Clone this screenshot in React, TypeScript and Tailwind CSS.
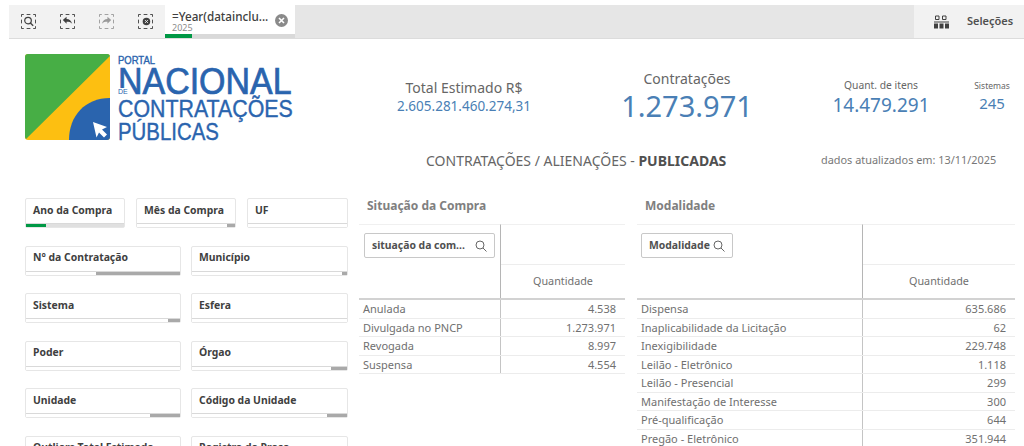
import React from "react";

const font = { fontFamily: '"Noto Sans", "Liberation Sans", sans-serif' };

function Bracket({ children, dim }: { children: React.ReactNode; dim?: boolean }) {
  return (
    <svg width="15" height="15" viewBox="0 0 16 16" fill="none" stroke={dim ? "#9a9a9a" : "#404040"} strokeWidth="1">
      <path d="M.5 3V.5H3M6 .5h4M13 .5h2.500V3M15.500 6v4M15.500 13v2.500H13M10 15.500H6M3 15.500H.5V13M.5 10V6" />
      {children}
    </svg>
  );
}

function Toolbar() {
  return (
    <div className="h-[34px] ml-[9px] flex bg-[#e6e6e6] border-b border-[#dcdcdc]">
      <div className="w-[156px] bg-[#f2f2f2] flex items-center pl-[12px] gap-[24px]">
        <Bracket><circle cx="7.500" cy="7" r="3.500" stroke="#404040" strokeWidth="1.300" /><path d="M10 9.500l3 3" stroke="#404040" strokeWidth="1.500" /></Bracket>
        <Bracket><path d="M3 6.500L7 3v2.300c3 0 5 1.800 6 5-1.500-1.700-3.500-2-6-2V10.500z" fill="#404040" stroke="none" /></Bracket>
        <Bracket dim><path d="M13 6.500L9 3v2.300c-3 0-5 1.800-6 5 1.500-1.700 3.500-2 6-2V10.500z" fill="#9a9a9a" stroke="none" /></Bracket>
        <Bracket><circle cx="9" cy="8" r="4" fill="#404040" stroke="none" /><path d="M7.500 6.500l3 3M10.500 6.500l-3 3" stroke="#f2f2f2" strokeWidth="1" /></Bracket>
      </div>
      <div className="w-[130px] bg-white relative pl-[7px] pt-[4px]">
        <div className="text-[11.700px] leading-[14px] text-[#404040] font-medium whitespace-nowrap">=Year(datainclu...</div>
        <div className="text-[9px] leading-[10px] text-[#8c8c8c]">2025</div>
        <svg className="absolute right-[7px] top-[9px]" width="13" height="13" viewBox="0 0 13 13">
          <circle cx="6.500" cy="6.500" r="6.500" fill="#8a8a8a" />
          <path d="M4 4l5 5M9 4l-5 5" stroke="#fff" strokeWidth="1.600" />
        </svg>
        <div className="absolute left-0 right-0 bottom-0 h-[4px] bg-[#d9d9d9]">
          <div className="w-[27px] h-full bg-[#009845]" />
        </div>
      </div>
      <div className="flex-1" />
      <div className="w-[110px] bg-[#f2f2f2] flex items-center pl-[20px] gap-[18px]">
        <svg width="15" height="14" viewBox="0 0 15 14" fill="#404040">
          <path d="M1.500 1h3.500v3.500H1.500zM8.500 1H12v3.500H8.500z" fill="none" stroke="#404040" />
          <path d="M0 6.500h15v1H0zM0 8.500h4v5H0zM5.500 8.500h4v5h-4zM11 8.500h4v5h-4z" />
        </svg>
        <span className="text-[11px] font-semibold text-[#505050] whitespace-nowrap">Seleções</span>
      </div>
    </div>
  );
}

function Logo() {
  return (
    <div className="flex gap-[8px] w-[349px] shrink-0">
      <svg width="85" height="86" viewBox="0 0 85 86" className="shrink-0">
        <rect width="85" height="86" rx="3" fill="#fdbf11" />
        <path d="M3 0h79a3 3 0 0 1 3 2L1 85a3 3 0 0 1-1-2V3a3 3 0 0 1 3-3z" fill="#47ae45" />
        <path d="M85 44C60 44 44 62 44 86h38a3 3 0 0 0 3-3z" fill="#2a64ae" />
        <path d="M68 68l14 5-5 2.500 5 5-3 3-5-5-2.500 5z" fill="#fff" />
      </svg>
      <div className="text-[#2a64ae] whitespace-nowrap relative [-webkit-text-stroke:0.4px_#2a64ae]" style={{ fontFamily: '"Liberation Sans", sans-serif' }}>
        <div className="text-[11px] leading-[12px] h-[11px] origin-left scale-x-[0.86]">PORTAL</div>
        <div className="text-[36px] leading-[33px] h-[33px] origin-left scale-x-[0.943] [-webkit-text-stroke:0.7px_#2a64ae]">NACIONAL</div>
        <div className="text-[24px] leading-[21px] h-[21px] origin-left scale-x-[0.89]">CONTRATAÇÕES</div>
        <div className="text-[24px] leading-[25px] h-[25px] origin-left scale-x-[0.85]">PÚBLICAS</div>
        <span className="absolute left-0 top-[34px] text-[7px] leading-[7px] bg-white [-webkit-text-stroke:0px]">DE</span>
      </div>
    </div>
  );
}

function Kpi({ w, label, value, labelCls, valueCls, mt }: { w: string; label: string; value: string; labelCls: string; valueCls: string; mt: string }) {
  return (
    <div className={`${w} ${mt} text-center shrink-0 whitespace-nowrap`}>
      <div className={`${labelCls} text-[#666]`}>{label}</div>
      <div className={`${valueCls} text-[#4a7fb5]`}>{value}</div>
    </div>
  );
}

function Filter({ label, w, bar, green }: { label: string; w: string; bar?: string; green?: boolean }) {
  return (
    <div className={`${w} h-[30px] bg-white border border-[#e6e6e6] rounded-[2px] flex flex-col shrink-0`}>
      <div className="flex-1 pl-[7px] pb-[1px] flex items-center text-[10.400px] font-bold text-[#404040] whitespace-nowrap overflow-hidden">{label}</div>
      <div className={`h-[4px] border-t border-[#d9d9d9] flex ${green ? "bg-[#e0e0e0]" : "bg-white justify-end"}`}>
        {bar && <div className={`${bar} h-[3px] ${green ? "bg-[#009845]" : "bg-[#a9a9a9]"}`} />}
      </div>
    </div>
  );
}

function SearchBox({ label, w, ml }: { label: string; w: string; ml: string }) {
  return (
    <div className={`${w} ${ml} h-[25px] mt-[8px] border border-[#c8c8c8] rounded-[2px] bg-white flex items-center justify-between px-[7px]`}>
      <span className="text-[10.400px] font-bold text-[#505050] whitespace-nowrap">{label}</span>
      <svg width="12" height="12" viewBox="0 0 12 12" fill="none" stroke="#666" strokeWidth="1" className="shrink-0">
        <circle cx="5" cy="5" r="4" />
        <path d="M8 8l3.500 3.500" />
      </svg>
    </div>
  );
}

function DataTable({ title, search, searchW, searchMl, w, col, rows, titlePl }: { title: string; search: string; searchW: string; searchMl: string; w: string; col: string; rows: [string, string][]; titlePl: string }) {
  return (
    <div className={`${w} shrink-0`}>
      <div className={`h-[36px] ${titlePl} pt-[10px] text-[12px] leading-[16px] font-bold text-[#808080]`}>{title}</div>
      <div className="flex h-[76px] border-b-2 border-[#d2d2d2]">
        <div className={`${col} border-r border-[#b5b5b5] border-t border-t-[#f0f0f0] shrink-0`}>
          <SearchBox label={search} w={searchW} ml={searchMl} />
        </div>
        <div className="flex-1 flex flex-col border-t border-[#f0f0f0]">
          <div className="h-[40px] border-b border-[#ededed]" />
          <div className="flex-1 flex items-center justify-center text-[10.800px] text-[#707070]">Quantidade</div>
        </div>
      </div>
      {rows.map(([a, b]) => (
        <div key={a} className="flex h-[18.500px] border-b border-[#ececec] text-[11px] leading-[18px] text-[#707070] whitespace-nowrap">
          <div className={`${col} border-r border-[#c4c4c4] pl-[4px] shrink-0`}>{a}</div>
          <div className="flex-1 text-right pr-[9px]">{b}</div>
        </div>
      ))}
    </div>
  );
}

const sit: [string, string][] = [
  ["Anulada", "4.538"],
  ["Divulgada no PNCP", "1.273.971"],
  ["Revogada", "8.997"],
  ["Suspensa", "4.554"],
];
const mod: [string, string][] = [
  ["Dispensa", "635.686"],
  ["Inaplicabilidade da Licitação", "62"],
  ["Inexigibilidade", "229.748"],
  ["Leilão - Eletrônico", "1.118"],
  ["Leilão - Presencial", "299"],
  ["Manifestação de Interesse", "300"],
  ["Pré-qualificação", "644"],
  ["Pregão - Eletrônico", "351.944"],
];

export default function App() {
  return (
    <div className="w-[1024px] h-[446px] overflow-hidden bg-white pt-[5px]" style={font}>
      <Toolbar />
      <div className="flex pl-[25px] pt-[15px] h-[101px]">
        <Logo />
        <Kpi w="w-[180px]" mt="mt-[25px]" label="Total Estimado R$" value="2.605.281.460.274,31" labelCls="text-[14px] leading-[18px]" valueCls="text-[13.500px] leading-[18px]" />
        <Kpi w="w-[266px]" mt="mt-[15px]" label="Contratações" value="1.273.971" labelCls="text-[14px] leading-[19px]" valueCls="text-[29px] leading-[36px]" />
        <Kpi w="w-[122px]" mt="mt-[24px]" label="Quant. de itens" value="14.479.291" labelCls="text-[10.300px] leading-[14px]" valueCls="text-[19px] leading-[26px]" />
        <Kpi w="w-[100px]" mt="mt-[26px]" label="Sistemas" value="245" labelCls="text-[8.500px] leading-[12px]" valueCls="text-[15px] leading-[22px]" />
      </div>
      <div className="flex h-[58px] pt-[12px]">
        <div className="ml-[426px] w-[395px] text-[14px] leading-[18px] text-[#666] whitespace-nowrap">
          CONTRATAÇÕES / ALIENAÇÕES - <b className="text-[#505050]">PUBLICADAS</b>
        </div>
        <div className="text-[10.900px] leading-[16px] text-[#777] whitespace-nowrap">dados atualizados em: 13/11/2025</div>
      </div>
      <div className="flex pl-[25px] items-start">
        <div className="w-[323px] shrink-0 flex flex-col gap-[17.500px]">
          <div className="flex justify-between">
            <Filter label="Ano da Compra" w="w-[100px]" bar="w-[20px]" green />
            <Filter label="Mês da Compra" w="w-[100px]" bar="w-[8px]" />
            <Filter label="UF" w="w-[101px]" />
          </div>
          <div className="flex justify-between">
            <Filter label="N° da Contratação" w="w-[156px]" bar="w-[84px]" />
            <Filter label="Município" w="w-[157px]" bar="w-[5px]" />
          </div>
          <div className="flex justify-between">
            <Filter label="Sistema" w="w-[156px]" bar="w-[12px]" />
            <Filter label="Esfera" w="w-[157px]" />
          </div>
          <div className="flex justify-between">
            <Filter label="Poder" w="w-[156px]" />
            <Filter label="Órgao" w="w-[157px]" bar="w-[16px]" />
          </div>
          <div className="flex justify-between">
            <Filter label="Unidade" w="w-[156px]" bar="w-[30px]" />
            <Filter label="Código da Unidade" w="w-[157px]" bar="w-[20px]" />
          </div>
          <div className="flex justify-between">
            <Filter label="Outliers Total Estimado" w="w-[156px]" />
            <Filter label="Registro de Preço" w="w-[157px]" />
          </div>
        </div>
        <div className="flex gap-[12px] ml-[11px] -mt-[10px]">
          <DataTable title="Situação da Compra" titlePl="pl-[8px]" search="situação da com..." searchW="w-[131px]" searchMl="ml-[5px]" w="w-[266px]" col="w-[142px]" rows={sit} />
          <DataTable title="Modalidade" titlePl="pl-[8px]" search="Modalidade" searchW="w-[92px]" searchMl="ml-[4px]" w="w-[378px]" col="w-[226px]" rows={mod} />
        </div>
      </div>
    </div>
  );
}
